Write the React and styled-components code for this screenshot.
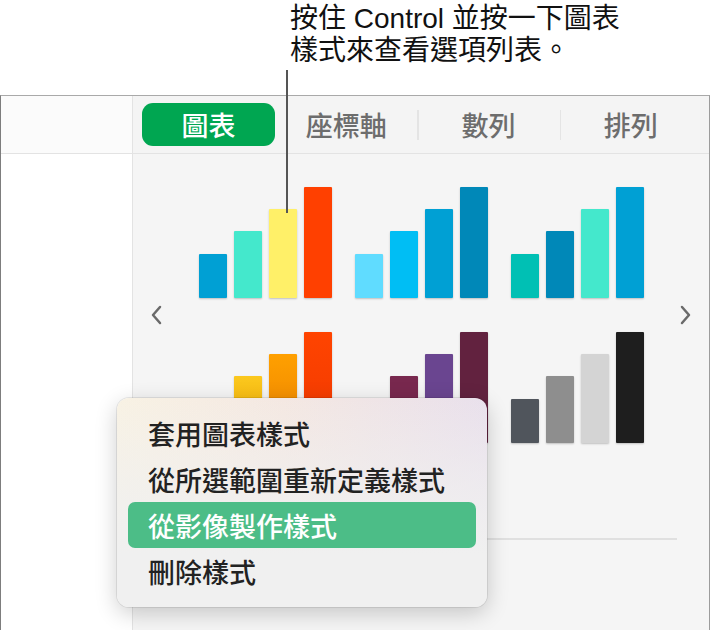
import React from 'react'
import styled, { createGlobalStyle } from 'styled-components'

const GlobalStyle = createGlobalStyle`
    html, body {
        margin: 0;
        padding: 0;
        background: #fff;
    }
    body {
        font-family: "Liberation Sans", "Noto Sans CJK TC", sans-serif;
    }
`

const Page = styled.div`
    position: relative;
    width: 713px;
    height: 630px;
    overflow: hidden;
    background: #fff;
`
const Callout = styled.div`
    height: 95px;
    box-sizing: border-box;
    padding: 3px 0 0 290px;
    font-size: 28px;
    line-height: 32px;
    color: #111;
    p {
        margin: 0;
    }
`
const LeaderLine = styled.div`
    position: absolute;
    left: 286px;
    top: 70px;
    width: 1.5px;
    height: 143px;
    background: #555;
    z-index: 2;
`
const Window = styled.div`
    display: grid;
    grid-template-columns: 132px 1fr;
    width: 710px;
    height: 535px;
    box-sizing: border-box;
    border-top: 1px solid #a9a9a9;
    border-left: 1px solid #7d7d7d;
    border-right: 1px solid #9c9c9c;
`
const Sidebar = styled.div`
    background: #fff;
    border-right: 1px solid #e3e3e3;
`
const SidebarHead = styled.div`
    height: 57px;
    background: #fbfbfb;
    border-bottom: 1px solid #e3e3e3;
`
const Panel = styled.div`
    background: #f5f5f5;
    display: flex;
    flex-direction: column;
`
const TabBar = styled.div`
    height: 57px;
    display: flex;
    align-items: center;
    padding: 0 7px 0 9px;
    background: #f4f4f4;
    border-bottom: 1px solid #e3e3e3;
`
const Tab = styled.div`
    position: relative;
    height: 43px;
    display: flex;
    align-items: center;
    justify-content: center;
    font-size: 27px;
    font-weight: 500;
    color: ${p => (p.$active ? '#fff' : '#6d6d6d')};
    background: ${p => (p.$active ? '#00a651' : 'transparent')};
    border-radius: 11px;
    width: ${p => (p.$active ? '133px' : 'auto')};
    flex: ${p => (p.$active ? 'none' : '1')};
    &::before {
        content: '';
        display: ${p => (p.$divider ? 'block' : 'none')};
        position: absolute;
        left: 0;
        top: 7px;
        bottom: 6px;
        width: 1.5px;
        background: #e4e4e4;
    }
`
const Carousel = styled.div`
    display: grid;
    grid-template-columns: 66px 445px 1fr;
    align-items: center;
    padding-top: 33px;
`
const Arrow = styled.div`
    display: flex;
    justify-content: ${p => (p.$right ? 'flex-end' : 'flex-start')};
    padding: ${p => (p.$right ? '0 17px 0 0' : '0 0 0 17px')};
    svg {
        display: block;
    }
`
const StyleGrid = styled.div`
    display: grid;
    grid-template-columns: repeat(3, 133px);
    grid-auto-rows: 111px;
    column-gap: 23px;
    row-gap: 34px;
`
const Chart = styled.div`
    display: flex;
    align-items: flex-end;
    gap: 7px;
`
const Bar = styled.div`
    width: 28px;
    border-radius: 1px;
    background: ${p => p.$color};
    box-shadow: 0 1px 2px rgba(0, 0, 0, 0.22);
`
const Divider = styled.div`
    height: 2px;
    margin: 95px 32px 0;
    background: #e0e0e0;
`
const Menu = styled.div`
    position: absolute;
    left: 117px;
    top: 398px;
    width: 370px;
    box-sizing: border-box;
    padding: 12px 11px 13px;
    border-radius: 12px;
    background:
        linear-gradient(180deg, rgba(240, 240, 240, 0) 0%, rgba(240, 240, 240, 0.7) 45%, #f0f0f0 75%),
        linear-gradient(90deg, #f8f2e4 0%, #f4e8e2 45%, #e9e0ec 100%);
    box-shadow: 0 0 0 1px rgba(0, 0, 0, 0.08), 0 6px 22px rgba(0, 0, 0, 0.2);
    z-index: 3;
`
const MenuItem = styled.div`
    height: 46px;
    display: flex;
    align-items: center;
    padding-left: 20px;
    border-radius: 7px;
    font-size: 27px;
    font-weight: 500;
    color: ${p => (p.$selected ? '#fff' : '#222')};
    background: ${p => (p.$selected ? '#4cbd87' : 'transparent')};
`

const heights = [44, 67, 89, 111]

const charts = [
    ['#00a0d4', '#44e8cc', '#fff068', '#ff4000'],
    ['#60dcff', '#00bef4', '#00a0d4', '#0088b8'],
    ['#00c0b4', '#0088b8', '#44e8cc', '#00a0d4'],
    [
        'linear-gradient(#ffd84a, #f5b300)',
        'linear-gradient(#fbc81e, #f3a800)',
        'linear-gradient(#ffa000, #ea8000)',
        'linear-gradient(#ff4400, #f03800)',
    ],
    ['#8a2e5a', '#78284e', '#6a4590', '#62223f'],
    ['#50555c', '#8e8e8e', '#d4d4d4', '#1e1e1e'],
]

const menuItems = ['套用圖表樣式', '從所選範圍重新定義樣式', '從影像製作樣式', '刪除樣式']

const Chevron = ({ right }) => (
    <svg width="14" height="22" viewBox="0 0 14 22">
        <path
            d={right ? 'M4 3 L11 11 L4 19' : 'M10 3 L3 11 L10 19'}
            fill="none"
            stroke="#6a6a6a"
            strokeWidth="2.5"
            strokeLinecap="round"
            strokeLinejoin="round"
        />
    </svg>
)

const App = () => {
    return (
        <Page>
            <GlobalStyle />
            <Callout>
                <p>按住 Control 並按一下圖表</p>
                <p>樣式來查看選項列表。</p>
            </Callout>
            <LeaderLine />
            <Window>
                <Sidebar>
                    <SidebarHead />
                </Sidebar>
                <Panel>
                    <TabBar>
                        <Tab $active>圖表</Tab>
                        <Tab>座標軸</Tab>
                        <Tab $divider>數列</Tab>
                        <Tab $divider>排列</Tab>
                    </TabBar>
                    <Carousel>
                        <Arrow><Chevron /></Arrow>
                        <StyleGrid>
                            {charts.map((colors, i) => (
                                <Chart key={i}>
                                    {colors.map((c, j) => (
                                        <Bar key={j} $color={c} style={{ height: heights[j] }} />
                                    ))}
                                </Chart>
                            ))}
                        </StyleGrid>
                        <Arrow $right><Chevron right /></Arrow>
                    </Carousel>
                    <Divider />
                </Panel>
            </Window>
            <Menu>
                {menuItems.map((item, i) => (
                    <MenuItem key={item} $selected={i === 2}>{item}</MenuItem>
                ))}
            </Menu>
        </Page>
    )
}

export default App
